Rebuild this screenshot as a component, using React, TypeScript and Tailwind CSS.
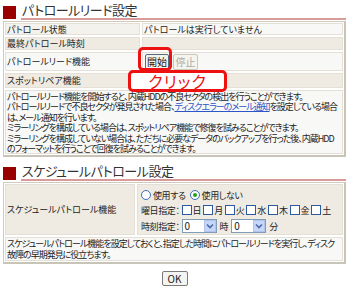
import React from "react";

const Title = ({ text }: { text: string }) => (
  <div className="flex items-end h-[18px]">
    <div className="w-[13px] h-[13px] bg-[#990000] mb-[1px]" />
    <div className="flex-1 ml-[5px] border-b-2 border-[#d99a9a] h-[18px] flex items-end">
      <span className="text-[13px] leading-[16px] tracking-[-0.5px] text-[#333] pl-[1px]">{text}</span>
    </div>
  </div>
);

const Cell = ({ children, className = "" }: { children?: React.ReactNode; className?: string }) => (
  <div className={"border border-[#e4e0d6] px-[1px] flex items-center whitespace-nowrap " + className}>{children}</div>
);

const Check = ({ label }: { label: string }) => (
  <span className="inline-flex items-center mr-[2px]">
    <span className="w-[10px] h-[10px] border border-[#2a5aa0] bg-white inline-block mr-[1px]" />
    <span>{label}</span>
  </span>
);

const Select = () => (
  <span className="inline-flex items-center w-[35px] h-[14px] border border-[#7f9db9] bg-white">
    <span className="flex-1 pl-[2px] text-[10px] leading-[12px]">0</span>
    <span className="w-[12px] h-[12px] bg-[#c6d6f8] border border-[#b0c4ee] flex items-center justify-center">
      <svg width="8" height="6" viewBox="0 0 8 6"><path d="M1 1.5 L4 4.5 L7 1.5" stroke="#4d6aa8" strokeWidth="1.6" fill="none" /></svg>
    </span>
  </span>
);

export default function App() {
  return (
    <div className="w-[350px] h-[289px] bg-white relative overflow-hidden font-['Noto_Sans_CJK_JP',sans-serif] text-[9px] leading-[11px] text-[#222] [font-feature-settings:'palt']">
      <div className="pl-[3px] pr-[4px] pt-[2px]">
        <Title text="パトロールリード設定" />
        <div className="mt-[1px] border border-[#cfcabc] border-r-2 border-b-2 border-r-[#c8c4b8] border-b-[#c8c4b8] p-[1px] flex flex-col gap-[2px]">
          <div className="flex gap-[2px] h-[12px]">
            <Cell className="w-[135px] bg-[#f4f2ed]">パトロール状態</Cell>
            <Cell className="flex-1 bg-[#f8f8f7]">パトロールは実行していません</Cell>
          </div>
          <div className="flex gap-[2px] h-[13px]">
            <Cell className="w-[135px] bg-[#efebe2]">最終パトロール時刻</Cell>
            <Cell className="flex-1 bg-[#efebe2]"></Cell>
          </div>
          <div className="flex gap-[2px] h-[19px]">
            <Cell className="w-[135px] bg-[#f8f8f7]">パトロールリード機能</Cell>
            <Cell className="flex-1 bg-[#f8f8f7] gap-[4px] pl-[2px]">
              <span className="h-[16px] w-[24px] border border-[#5a6b80] rounded-[2px] bg-[#f3f3ee] flex items-center justify-center text-[10px]">開始</span>
              <span className="h-[16px] w-[25px] border border-[#cac7b8] rounded-[2px] bg-[#f5f4ef] flex items-center justify-center text-[10px] text-[#b0ad9f]">停止</span>
            </Cell>
          </div>
          <div className="flex gap-[2px] h-[15px]">
            <Cell className="w-[135px] bg-[#efebe2]">スポットリペア機能</Cell>
            <Cell className="flex-1 bg-[#efebe2]"></Cell>
          </div>
          <div className="border border-[#e4e0d6] bg-[#f8f8f7] px-[1px] py-[1px] h-[64px] leading-[10.4px] tracking-[-1px] whitespace-nowrap overflow-hidden">
            パトロールリード機能を開始すると、内蔵HDDの不良セクタの検出を行うことができます。<br />
            パトロールリードで不良セクタが発見された場合、<span className="text-[#2b55c8] underline">ディスクエラーのメール通知</span>を設定している場合<br />
            は、メール通知を行います。<br />
            ミラーリングを構成している場合は、スポットリペア機能で修復を試みることができます。<br />
            ミラーリングを構成していない場合は、ただちに必要なデータのバックアップを行った後、内蔵HDD<br />
            のフォーマットを行うことで回復を試みることができます。
          </div>
        </div>

        <div className="mt-[6px]">
          <Title text="スケジュールパトロール設定" />
        </div>
        <div className="mt-[1px] border border-[#cfcabc] border-r-2 border-b-2 border-r-[#c8c4b8] border-b-[#c8c4b8] p-[1px] flex flex-col gap-[2px]">
          <div className="flex gap-[2px] h-[51px]">
            <Cell className="w-[130px] bg-[#efebe2]">スケジュールパトロール機能</Cell>
            <div className="flex-1 border border-[#e4e0d6] bg-[#efebe2] pl-[3px] pt-[4px] flex flex-col gap-[3px] whitespace-nowrap tracking-[-0.4px]">
              <div className="flex items-center h-[12px]">
                <span className="w-[10px] h-[10px] rounded-full border border-[#3a6fb8] bg-white mr-[2px]" />
                <span className="mr-[4px]">使用する</span>
                <span className="w-[10px] h-[10px] rounded-full border border-[#3a6fb8] bg-white mr-[2px] flex items-center justify-center">
                  <span className="w-[4px] h-[4px] rounded-full bg-[#21a121]" />
                </span>
                <span>使用しない</span>
              </div>
              <div className="flex items-center h-[12px]">
                <span className="mr-[2px]">曜日指定：</span>
                <Check label="日" />
                <Check label="月" />
                <Check label="火" />
                <Check label="水" />
                <Check label="木" />
                <Check label="金" />
                <Check label="土" />
              </div>
              <div className="flex items-center h-[14px]">
                <span className="mr-[2px]">時刻指定：</span>
                <Select />
                <span className="mx-[3px]">時</span>
                <Select />
                <span className="ml-[3px]">分</span>
              </div>
            </div>
          </div>
          <div className="border border-[#e4e0d6] bg-[#f8f8f7] px-[1px] py-[1px] h-[24px] leading-[10.5px] tracking-[-1px] whitespace-nowrap overflow-hidden">
            スケジュールパトロール機能を設定しておくと、指定した時間にパトロールリードを実行し、ディスク<br />
            故障の早期発見に役立ちます。
          </div>
        </div>
        <div className="flex justify-center mt-[7px]">
          <span className="w-[26px] h-[15px] border border-[#7a7a7a] rounded-[2px] bg-[#f4f4f0] flex items-center justify-center text-[10px]">OK</span>
        </div>
      </div>

      <div className="absolute left-[138px] top-[47px] w-[34px] h-[24px] border-[3px] border-[#ee1111] rounded-[5px]" />
      <div className="absolute left-[128px] top-[70px] w-[99px] h-[22px] border-[3px] border-[#ee1111] rounded-[5px] bg-white flex items-center justify-center">
        <span className="text-[#ee1111] text-[16px] leading-[16px] tracking-[1px]">クリック</span>
      </div>
    </div>
  );
}
